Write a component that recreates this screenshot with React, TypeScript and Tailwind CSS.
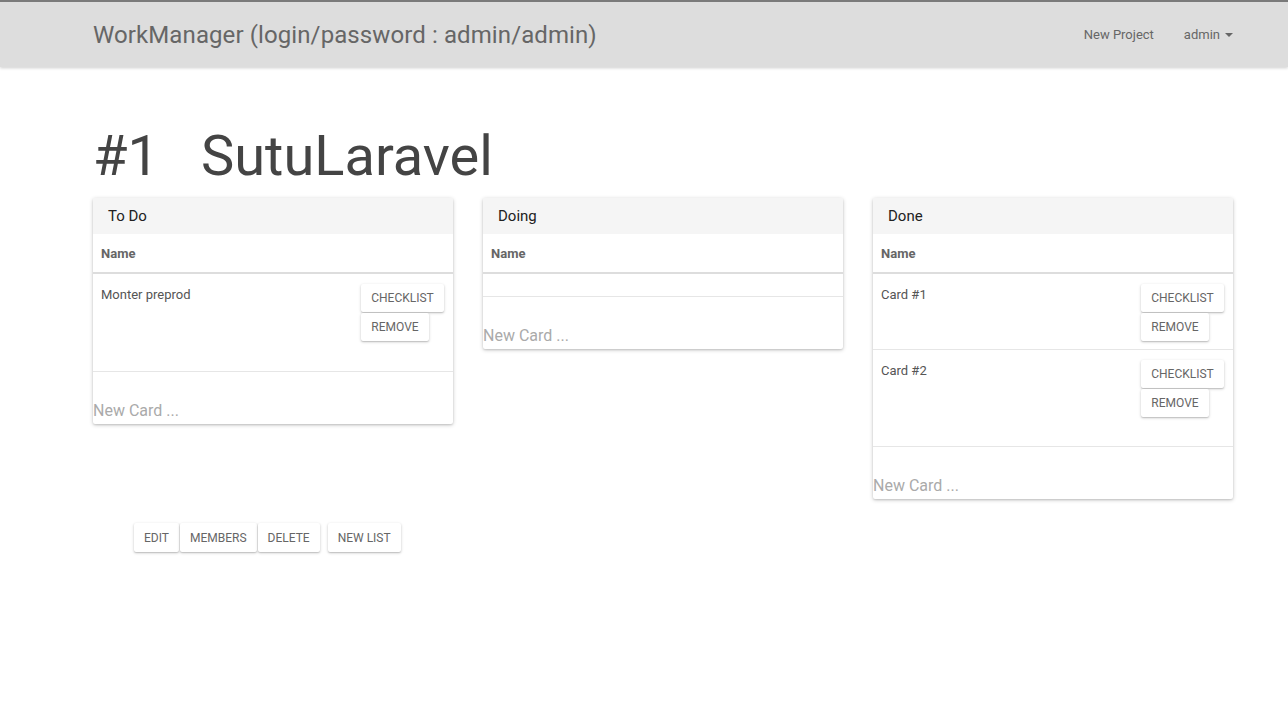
import { ReactNode } from "react";

type Card = { name: string };

const lists: { title: string; cards: Card[] }[] = [
  { title: "To Do", cards: [{ name: "Monter preprod" }] },
  { title: "Doing", cards: [] },
  { title: "Done", cards: [{ name: "Card #1" }, { name: "Card #2" }] },
];

function Btn({ children, className = "" }: { children: ReactNode; className?: string }) {
  return (
    <button
      className={
        "bg-white rounded-[2px] text-[12px] leading-none text-[#666] uppercase h-[28px] shadow-[0_1px_3px_rgba(0,0,0,0.22),0_1px_1px_rgba(0,0,0,0.1)] " +
        className
      }
    >
      {children}
    </button>
  );
}

function ListPanel({ title, cards }: { title: string; cards: Card[] }) {
  return (
    <div className="w-[360px] bg-white rounded-[2px] shadow-[0_1px_4px_rgba(0,0,0,0.2),0_1px_2px_rgba(0,0,0,0.12)]">
      <div className="h-[36px] bg-[#f5f5f5] px-[15px] flex items-center text-[15px] text-[#212121]">{title}</div>
      <div className="h-[40px] px-[8px] pt-[1px] flex items-center text-[13px] font-bold text-[#666] border-b-2 border-[#ddd]">
        Name
      </div>
      {cards.map((c, i) => (
        <div key={i} className={"h-[75px] flex justify-between px-[8px] " + (i > 0 ? "border-t border-[#e6e6e6]" : "")}>
          <div className="pt-[11px] text-[13px] text-[#555]">{c.name}</div>
          <div className="pt-[10px] w-[84px] flex flex-col items-start gap-[1px]">
            <Btn className="w-[83px]">Checklist</Btn>
            <Btn className="w-[68px]">Remove</Btn>
          </div>
        </div>
      ))}
      <div className="h-[23px] border-b border-[#e6e6e6]" />
      <div className="h-[52px] flex items-end pb-[1px]">
        <input
          placeholder="New Card ..."
          className="w-full text-[16px] text-[#444] placeholder:text-[#aaa] outline-none bg-transparent"
        />
      </div>
    </div>
  );
}

export default function App() {
  return (
    <div className="min-h-screen bg-white font-['Roboto',sans-serif] text-[#333]">
      {/* Navbar */}
      <nav className="h-[67px] bg-[#dddddd] border-t-2 border-[#7a7a7a] shadow-[0_1px_3px_rgba(0,0,0,0.2)] flex items-center">
        <div className="ml-[93px] w-[1140px] flex items-center justify-between">
          <span className="text-[24px] tracking-[0.1px] text-[#666]">WorkManager (login/password : admin/admin)</span>
          <div className="flex items-center text-[13px] text-[#666]">
            <a href="#">New Project</a>
            <a href="#" className="ml-[30px] flex items-center">
              admin
              <span className="ml-[5px] w-0 h-0 border-l-4 border-r-4 border-t-4 border-l-transparent border-r-transparent border-t-[#666]" />
            </a>
          </div>
        </div>
      </nav>

      <div className="ml-[93px] w-[1140px]">
        <h1 className="mt-[52px] text-[56px] leading-[75px] text-[#444] flex">
          <span>#1</span>
          <span className="ml-[42px]">SutuLaravel</span>
        </h1>

        <div className="mt-[4px] flex items-start justify-between">
          {lists.map((l) => (
            <ListPanel key={l.title} title={l.title} cards={l.cards} />
          ))}
        </div>

        <div className="mt-[24px] ml-[41px] flex items-center">
          <div className="flex gap-[1px]">
            <Btn className="px-[10px] h-[29px]">Edit</Btn>
            <Btn className="px-[10px] h-[29px]">Members</Btn>
            <Btn className="px-[10px] h-[29px]">Delete</Btn>
          </div>
          <Btn className="ml-[8px] px-[10px] h-[29px]">New List</Btn>
        </div>
      </div>
    </div>
  );
}
